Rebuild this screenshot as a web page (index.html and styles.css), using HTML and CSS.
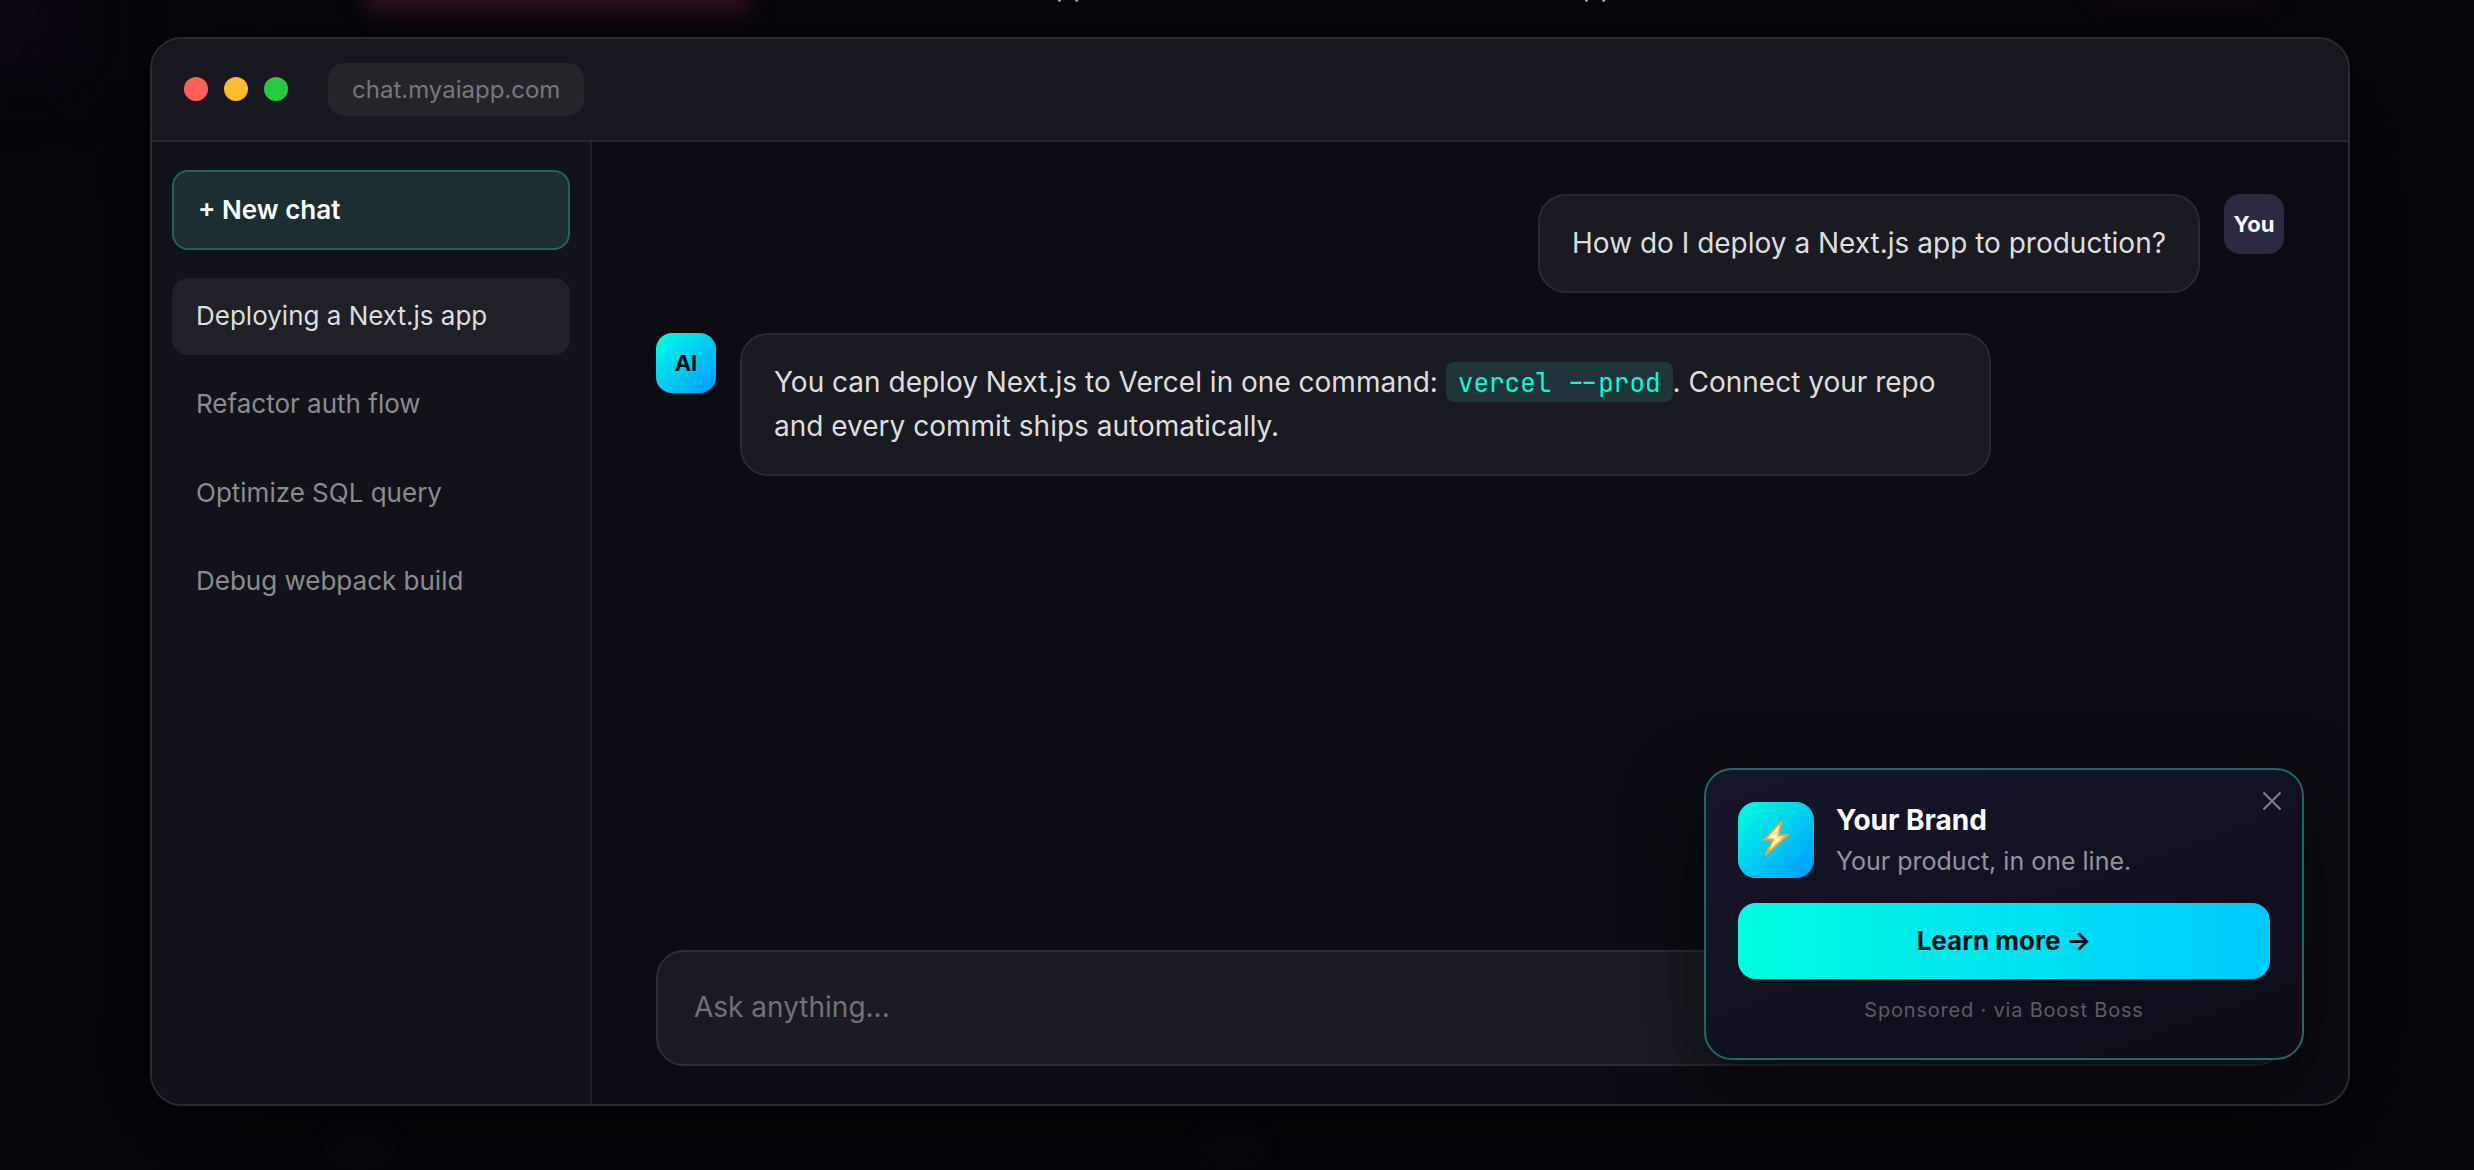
FILE: index.html
```html
<!DOCTYPE html>
<html lang="en">
<head>
<meta charset="utf-8">
<title>Chat demo</title>
<link rel="stylesheet" href="styles.css">
</head>
<body>
<div class="backdrop" aria-hidden="true">
  <span class="glow glow-red"></span>
  <span class="glow glow-edge"></span>
  <span class="glow glow-far"></span>
  <span class="glow glow-green-a"></span>
  <span class="glow glow-green-b"></span>
  <span class="caption caption-a">pp</span>
  <span class="caption caption-b">pp</span>
</div>
<main class="window">
  <header class="titlebar">
    <span class="dot dot-red"></span>
    <span class="dot dot-yellow"></span>
    <span class="dot dot-green"></span>
    <span class="url">chat.myaiapp.com</span>
  </header>
  <div class="body">
    <aside class="sidebar">
      <button class="new-chat">+ New chat</button>
      <nav class="history">
        <a class="item active">Deploying a Next.js app</a>
        <a class="item">Refactor auth flow</a>
        <a class="item">Optimize SQL query</a>
        <a class="item">Debug webpack build</a>
      </nav>
    </aside>
    <section class="chat">
      <div class="messages">
        <div class="message user">
          <div class="bubble">How do I deploy a Next.js app to production?</div>
          <div class="avatar">You</div>
        </div>
        <div class="message">
          <div class="avatar ai">AI</div>
          <div class="bubble reply">You can deploy Next.js to Vercel in one command: <code>vercel --prod</code>. Connect your repo and every commit ships automatically.</div>
        </div>
      </div>
      <div class="composer">Ask anything...</div>
    </section>
    <aside class="ad">
      <svg class="close" viewBox="0 0 20 20"><path d="M1.5 1.5l17 17M18.5 1.5l-17 17"/></svg>
      <div class="ad-head">
        <div class="logo">
          <svg viewBox="0 0 26 37"><path d="M18.3 1.5L1.5 19.6h8.6L2.8 35 24 15.2h-8.6z"/></svg>
        </div>
        <div class="ad-copy">
          <div class="brand">Your Brand</div>
          <div class="tagline">Your product, in one line.</div>
        </div>
      </div>
      <button class="cta">Learn more →</button>
      <div class="sponsor">Sponsored · via Boost Boss</div>
    </aside>
  </div>
</main>
</body>
</html>
```
FILE: styles.css
```css
* { box-sizing: border-box; }
body {
  margin: 0;
  height: 1170px;
  padding: 37px 124px 64px 150px;
  overflow: hidden;
  position: relative;
  background: #06060b;
  color: #fff;
  font-family: Inter, "Liberation Sans", sans-serif;
}
button { font: inherit; color: inherit; }

.backdrop { position: absolute; inset: 0; overflow: hidden; }
.glow { position: absolute; filter: blur(10px); }
.glow-red { left: 365px; top: -20px; width: 385px; height: 34px; background: #2e0f1e; }
.glow-edge { left: -60px; top: -40px; width: 150px; height: 120px; background: #0c0610; filter: blur(30px); }
.glow-far { left: 2100px; top: -20px; width: 170px; height: 26px; background: #14070f; }
.glow-green-a { left: 335px; top: 1138px; width: 50px; height: 22px; background: #04100f; }
.glow-green-b { left: 1205px; top: 1138px; width: 50px; height: 22px; background: #04100f; }
.caption { position: absolute; top: -31px; font-size: 28px; line-height: 34px; color: #c4c4c8; }
.caption-a { left: 1056px; }
.caption-b { left: 1583px; }

.window {
  position: relative;
  width: 2200px;
  height: 1069px;
  display: flex;
  flex-direction: column;
  border: 2px solid #2b2b32;
  border-radius: 32px;
  background: #0c0c14;
  overflow: hidden;
  box-shadow: 0 40px 120px rgba(0, 0, 0, .5);
}
.titlebar {
  display: flex;
  align-items: center;
  gap: 16px;
  height: 103px;
  flex: none;
  padding: 0 32px;
  background: #18171f;
  border-bottom: 2px solid #28282f;
}
.dot { width: 24px; height: 24px; margin-bottom: 1px; border-radius: 50%; }
.dot-red { background: #ff5f57; }
.dot-yellow { background: #febc2e; }
.dot-green { background: #28c840; }
.url {
  margin-left: 24px;
  padding: 12px 24px;
  border-radius: 16px;
  background: #25242a;
  color: #78777c;
  font-size: 24px;
  line-height: 29px;
}

.body { position: relative; flex: 1; display: flex; min-height: 0; }
.sidebar {
  width: 440px;
  padding: 28px 20px;
  background: #12121b;
  border-right: 2px solid #202028;
}
.new-chat {
  display: block;
  width: 100%;
  height: 80px;
  padding: 0 24px 2px;
  border: 2px solid #1e6658;
  border-radius: 16px;
  background: #1c2e31;
  font-size: 26px;
  font-weight: 600;
  text-align: left;
}
.history { display: flex; flex-direction: column; gap: 11px; margin-top: 28px; }
.item {
  padding: 0 24px 2px;
  height: 77.3px;
  line-height: 76px;
  border-radius: 16px;
  font-size: 26px;
  color: #8b8b90;
}
.item.active { background: #202028; color: #dededf; }

.chat {
  flex: 1;
  display: flex;
  flex-direction: column;
  justify-content: space-between;
  padding: 52px 64px 38px;
}
.messages { display: flex; flex-direction: column; gap: 40px; }
.message { display: flex; align-items: flex-start; gap: 24px; }
.message.user { justify-content: flex-end; }
.avatar {
  flex: none;
  width: 60px;
  height: 60px;
  border-radius: 16px;
  display: flex;
  align-items: center;
  justify-content: center;
  background: #2a2a42;
  font-size: 22px;
  font-weight: 700;
}
.avatar.ai { background: linear-gradient(135deg, #00ffe0, #0099ff); color: #0a0a12; }
.bubble {
  padding: 26px 32px;
  border: 2px solid #2a2a32;
  border-radius: 28px;
  background: #1a1a23;
  color: #dededf;
  font-size: 28px;
  line-height: 43.4px;
}
.reply { width: 1251px; }
code {
  padding: 3px 12px 2px;
  border-radius: 8px;
  background: #203439;
  color: #00ffd5;
  font-family: "JetBrains Mono", "DejaVu Sans Mono", monospace;
  font-size: 26px;
}
.composer {
  height: 116px;
  padding: 0 36px;
  border: 2px solid #2e2e36;
  border-radius: 28px;
  background: #1a1a23;
  color: #717178;
  font-size: 28px;
  line-height: 110px;
}

.ad {
  position: absolute;
  right: 44px;
  bottom: 44px;
  width: 600px;
  height: 292px;
  padding: 32px;
  border: 2px solid #1c6a63;
  border-radius: 28px;
  background: linear-gradient(160deg, #17162a, #0c0c16);
  box-shadow: 0 32px 80px rgba(0, 0, 0, .6);
}
.close {
  position: absolute;
  top: 21px;
  right: 20px;
  width: 20px;
  height: 20px;
  fill: none;
  stroke: #828189;
  stroke-width: 2;
}
.ad-head { display: flex; gap: 22px; }
.logo {
  width: 76px;
  height: 76px;
  padding-bottom: 4px;
  border-radius: 18px;
  display: flex;
  align-items: center;
  justify-content: center;
  background: linear-gradient(135deg, #00ffe0, #0099ff);
}
.logo svg { width: 26px; height: 37px; fill: #fff3c4; stroke: #f5a52a; stroke-width: 2; }
.brand { font-size: 28px; line-height: 34px; font-weight: 700; margin-top: 1px; }
.tagline { font-size: 25px; line-height: 31px; color: #95949d; margin-top: 9px; }
.cta {
  display: block;
  width: 100%;
  height: 76px;
  margin-top: 25px;
  padding: 0 0 2px;
  border: 0;
  border-radius: 18px;
  background: linear-gradient(90deg, #00ffe0, #00c8ff);
  color: #06121a;
  font-size: 26px;
  font-weight: 700;
}
.sponsor {
  margin-top: 19px;
  text-align: center;
  font-size: 20px;
  line-height: 25px;
  letter-spacing: .8px;
  color: #5c5c66;
}
```
